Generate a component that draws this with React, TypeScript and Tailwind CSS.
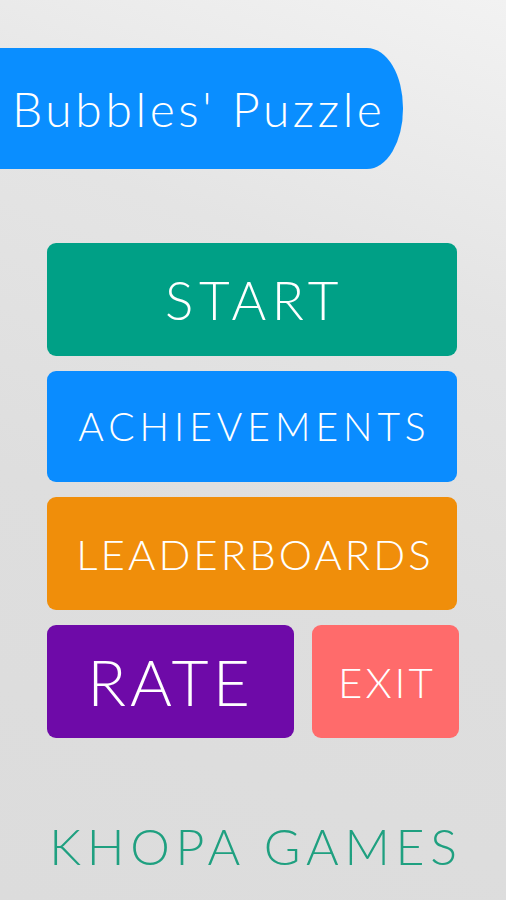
import React from "react";

const font = { fontFamily: "Lato, 'Noto Sans', sans-serif" };

interface MenuButtonProps {
  label: string;
  className: string;
  textClass: string;
}

function MenuButton({ label, className, textClass }: MenuButtonProps) {
  return (
    <button
      className={`flex items-center justify-center rounded-[9px] text-white font-light ${className}`}
    >
      <span className={`leading-none ${textClass}`}>{label}</span>
    </button>
  );
}

export default function App() {
  return (
    <div
      className="relative h-[900px] w-full overflow-hidden bg-[linear-gradient(200deg,#f2f2f2_0%,#e4e4e4_30%,#dedede_60%,#dcdcdc_100%)]"
      style={font}
    >
      <div className="pt-[48px]">
        <div className="flex h-[121px] w-[403px] items-center rounded-r-[36px_60px] bg-[#0a8eff] pl-[12px]">
          <span className="text-[48px] font-light leading-none tracking-[3.6px] text-white">
            Bubbles' Puzzle
          </span>
        </div>
      </div>

      <div className="ml-[47px] mt-[74px] flex w-[412px] flex-col gap-[15px]">
        <MenuButton
          label="START"
          className="h-[113px] w-[410px] bg-[#00a086]"
          textClass="text-[53px] tracking-[5.5px] pl-[5px]"
        />
        <MenuButton
          label="ACHIEVEMENTS"
          className="h-[111px] w-[410px] bg-[#0a8cff]"
          textClass="text-[39px] tracking-[5px] pl-[5px]"
        />
        <MenuButton
          label="LEADERBOARDS"
          className="h-[113px] w-[410px] bg-[#f08e0a]"
          textClass="text-[42px] tracking-[3px] pl-[6px]"
        />
        <div className="flex gap-[18px]">
          <MenuButton
            label="RATE"
            className="h-[113px] w-[247px] bg-[#6e0aa8]"
            textClass="text-[64px] tracking-[4px]"
          />
          <MenuButton
            label="EXIT"
            className="h-[113px] w-[147px] bg-[#ff6b6b]"
            textClass="text-[42px] tracking-[3px] pl-[3px]"
          />
        </div>
      </div>

      <div className="mt-[83px] flex justify-center">
        <span className="pl-[6px] text-[50px] font-light leading-none tracking-[5.7px] text-[#1fa080]">
          KHOPA GAMES
        </span>
      </div>
    </div>
  );
}
